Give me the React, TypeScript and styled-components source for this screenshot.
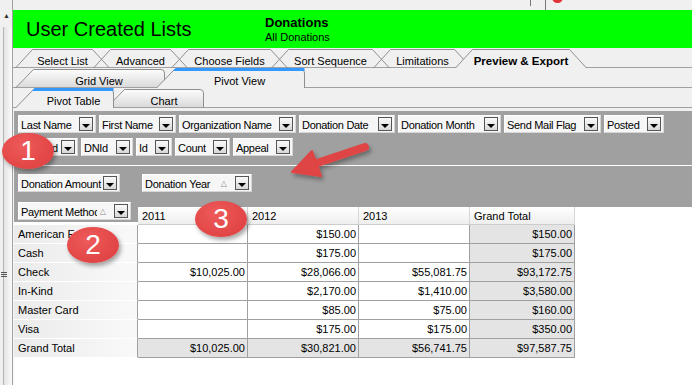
import React from "react";
import styled, { createGlobalStyle } from "styled-components";

const LINE = "#a0a0a0";
const PANEL = "#f0f0f0";
const TAB_EDGE = "#8f8f8f";
const UI_FONT = `"Liberation Sans", Arial, sans-serif`;

const GlobalStyle = createGlobalStyle`
  * { box-sizing: border-box; }
  html, body { margin: 0; padding: 0; background: #fff; }
  body { font-family: ${UI_FONT}; font-size: 11px; color: #000; }
`;

const Page = styled.div`
  position: relative;
  display: flex;
  width: 692px;
  height: 385px;
  overflow: hidden;
  background: #fff;
`;

const Gutter = styled.div`
  display: flex;
  flex-direction: column;
  flex: none;
  width: 13px;
  border-right: 1px solid ${LINE};
  background: ${PANEL};
`;

const ScrollUp = styled.div`
  height: 27px;
  padding: 12px 0 0 3px;
  font-size: 7px;
  line-height: 7px;
  color: #333;
`;

const ScrollTrack = styled.div`
  flex: 1;
  margin-left: 3px;
  padding-top: 245px;
  border-left: 1px solid #b4b4b4;
  background: linear-gradient(to right, #e4e4e4, #fbfbfb);
`;

const Grip = styled.div`
  width: 6px;
  height: 5px;
  margin-left: -3px;
  background: repeating-linear-gradient(#555 0 1px, transparent 1px 2px);
`;

const Main = styled.div`
  display: flex;
  flex-direction: column;
  flex: 1;
  min-width: 0;
`;

const TopStrip = styled.div`
  display: flex;
  align-items: flex-start;
  height: 10px;
  padding-left: 517px;
  background: ${PANEL};
`;

const StripMark = styled.span<{ $h: number; $gap: number }>`
  width: 1px;
  height: ${(p) => p.$h}px;
  margin-right: ${(p) => p.$gap}px;
  background: #777;
`;

const StripDot = styled.span`
  width: 11px;
  height: 11px;
  margin-top: -8px;
  border-radius: 50%;
  background: #e03535;
`;

const Header = styled.div`
  display: flex;
  align-items: center;
  height: 38px;
  background: #00ff00;
`;

const Title = styled.div`
  width: 252px;
  padding-left: 13px;
  font-size: 20px;
`;

const Subject = styled.div`
  display: flex;
  flex-direction: column;
`;

const SubjectName = styled.span`
  font-size: 13px;
  font-weight: 700;
  line-height: 15px;
`;

const SubjectSub = styled.span`
  font-size: 11px;
  line-height: 14px;
`;

const TabStrip = styled.div`
  display: flex;
  height: 20px;
  padding-left: 2px;
  background: ${PANEL};
  box-shadow: inset 0 -1px ${LINE};
`;

const TabBox = styled.div<{ $w: number; $overlap: number; $active?: boolean }>`
  position: relative;
  flex: none;
  width: ${(p) => p.$w}px;
  height: 20px;
  margin-left: ${(p) => -p.$overlap}px;
  z-index: ${(p) => (p.$active ? 2 : 1)};
`;

const TabShape = styled.svg`
  position: absolute;
  left: 0;
  top: 0;
  overflow: visible;
`;

const TabText = styled.span<{ $inset: number; $bold?: boolean }>`
  position: relative;
  display: block;
  padding: 6px 0 0 ${(p) => p.$inset}px;
  text-align: center;
  line-height: 14px;
  white-space: nowrap;
  font-weight: ${(p) => (p.$bold ? 700 : 400)};
  font-size: ${(p) => (p.$bold ? 11.5 : 11)}px;
`;

type TabProps = { label: string; width: number; active?: boolean; overlap?: number };

function StepTab({ label, width, active, overlap = 17 }: TabProps) {
  const outline = `M0.5 20 L17.5 1.5 H${width - 17.5} L${width - 0.5} 20`;
  return (
    <TabBox $w={width} $overlap={overlap} $active={active}>
      <TabShape width={width} height={20}>
        {active && <path d={`${outline} Z`} fill={PANEL} />}
        <path d={outline} fill="none" stroke={TAB_EDGE} />
      </TabShape>
      <TabText $inset={0} $bold={active}>
        {label}
      </TabText>
    </TabBox>
  );
}

function ViewTab({ label, width, active, overlap = 0 }: TabProps) {
  const id = `tabfill-${label.replace(/\s/g, "")}`;
  const outline = `M0.5 20 L18.5 1.5 H${width - 4} Q${width - 0.5} 1.5 ${width - 0.5} 5 V20`;
  const bottom = active ? 20 : 19;
  return (
    <TabBox $w={width} $overlap={overlap} $active={active}>
      <TabShape width={width} height={20}>
        <defs>
          <linearGradient id={id} x1="0" y1="0" x2="0" y2="1">
            <stop offset="0" stopColor="#fdfdfd" />
            <stop offset="1" stopColor="#dadada" />
          </linearGradient>
        </defs>
        <path
          d={`M0.5 ${bottom} L18.5 1.5 H${width - 4} Q${width - 0.5} 1.5 ${width - 0.5} 5 V${bottom} Z`}
          fill={active ? PANEL : `url(#${id})`}
        />
        <path d={outline} fill="none" stroke={TAB_EDGE} />
        {active && <path d={`M16.5 3.5 L19.5 0 H${width - 0.5} V3 H17 Z`} fill="#3399ff" />}
      </TabShape>
      <TabText $inset={18}>{label}</TabText>
    </TabBox>
  );
}

const PivotFrame = styled.div`
  flex: 1;
  border-left: 1px solid #f8f8f8;
  background: #fff;
`;

const FilterZone = styled.div`
  display: flex;
  flex-direction: column;
  gap: 5px;
  padding: 4px 0 9px 4px;
  border-top: 3px solid ${PANEL};
  border-bottom: 1px solid #fff;
  background: ${LINE};
`;

const FieldRow = styled.div`
  display: flex;
  gap: 3px;
`;

const DataZone = styled.div`
  display: flex;
  height: 41px;
  padding-top: 8px;
  background: ${LINE};
`;

const ZoneCell = styled.div<{ $w: number }>`
  flex: none;
  width: ${(p) => p.$w}px;
  padding-left: 4px;
`;

const FieldButton = styled.div<{ $w: number; $lift?: number }>`
  display: flex;
  align-items: center;
  flex: none;
  width: ${(p) => p.$w}px;
  height: 18px;
  margin-top: ${(p) => -(p.$lift ?? 0)}px;
  padding: 0 2px 0 2px;
  border: 1px solid;
  border-color: #ffffff #d6d6d6 #d6d6d6 #ffffff;
  background: #f6f6f6;
`;

const FieldLabel = styled.span`
  flex: 1;
  min-width: 0;
  overflow: hidden;
  white-space: nowrap;
  line-height: 14px;
  padding-top: 2px;
  letter-spacing: -0.3px;
`;

const SortMark = styled.span`
  margin: 0 8px 0 3px;
  font-family: "DejaVu Sans", sans-serif;
  font-size: 8px;
  color: #8c8c8c;
`;

const DropBox = styled.span`
  position: relative;
  flex: none;
  width: 14px;
  height: 14px;
  border: 1px solid #555;
  background: linear-gradient(#fafafa, #d8d8d8);

  &::after {
    content: "";
    position: absolute;
    left: 2px;
    bottom: 2px;
    border-left: 4px solid transparent;
    border-right: 4px solid transparent;
    border-top: 4px solid #000;
  }
`;

type FieldProps = { name: string; width: number; sorted?: boolean; lift?: number };

function Field({ name, width, sorted, lift }: FieldProps) {
  return (
    <FieldButton $w={width} $lift={lift}>
      <FieldLabel>{name}</FieldLabel>
      {sorted && <SortMark>△</SortMark>}
      <DropBox />
    </FieldButton>
  );
}

const COLUMNS = [124, 110, 111, 111, 105];

const PivotGrid = styled.div`
  display: grid;
  grid-template-columns: ${COLUMNS.map((c) => `${c}px`).join(" ")};
  grid-template-rows: 18px repeat(7, 19px);
`;

const CornerCell = styled.div`
  padding-left: 4px;
  background: linear-gradient(${LINE} 0 15px, transparent 15px);
`;

const ColHeader = styled.div`
  padding: 1px 0 0 4px;
  line-height: 16px;
  border-right: 1px solid #d6d6d6;
  border-bottom: 1px solid #cdcdcd;
  background: linear-gradient(#ffffff, #eeeeee);
  white-space: nowrap;
`;

const RowHeader = styled.div`
  padding: 1px 0 0 4px;
  line-height: 17px;
  overflow: hidden;
  white-space: nowrap;
  border-right: 1px solid ${LINE};
  border-bottom: 1px solid #fff;
  background: linear-gradient(to right, #ebebeb, #f9f9f9);
`;

const DataCell = styled.div<{ $total?: boolean }>`
  padding: 1px 2px 0 0;
  line-height: 17px;
  text-align: right;
  white-space: nowrap;
  border-right: 1px solid ${LINE};
  border-bottom: 1px solid ${LINE};
  background: ${(p) => (p.$total ? "#e4e4e4" : "#fff")};
`;

const Badge = styled.div<{ $x: number; $y: number }>`
  position: absolute;
  left: ${(p) => p.$x}px;
  top: ${(p) => p.$y}px;
  display: flex;
  align-items: center;
  justify-content: center;
  width: 52px;
  height: 36px;
  border-radius: 50%;
  background: radial-gradient(ellipse at 40% 35%, #ee5a5a, #dc3c3c);
  box-shadow: 2px 3px 4px rgba(0, 0, 0, 0.35);
  color: #fff;
  font-size: 28px;
  line-height: 1;
`;

const ArrowLayer = styled.svg`
  position: absolute;
  left: 0;
  top: 0;
  pointer-events: none;
`;

const stepTabs = [
  { label: "Select List", width: 95 },
  { label: "Advanced", width: 95 },
  { label: "Choose Fields", width: 117 },
  { label: "Sort Sequence", width: 119 },
  { label: "Limitations", width: 99 },
  { label: "Preview & Export", width: 132, active: true },
];

const filterRows = [
  [
    { name: "Last Name", width: 78 },
    { name: "First Name", width: 77 },
    { name: "Organization Name", width: 117 },
    { name: "Donation Date", width: 96 },
    { name: "Donation Month", width: 103 },
    { name: "Send Mail Flag", width: 97 },
    { name: "Posted", width: 60 },
  ],
  [
    { name: "NameId", width: 60 },
    { name: "DNId", width: 52 },
    { name: "Id", width: 36 },
    { name: "Count", width: 55 },
    { name: "Appeal", width: 60 },
  ],
];

const years = ["2011", "2012", "2013", "Grand Total"];

const rows: { label: string; values: string[] }[] = [
  { label: "American Express", values: ["", "$150.00", "", "$150.00"] },
  { label: "Cash", values: ["", "$175.00", "", "$175.00"] },
  { label: "Check", values: ["$10,025.00", "$28,066.00", "$55,081.75", "$93,172.75"] },
  { label: "In-Kind", values: ["", "$2,170.00", "$1,410.00", "$3,580.00"] },
  { label: "Master Card", values: ["", "$85.00", "$75.00", "$160.00"] },
  { label: "Visa", values: ["", "$175.00", "$175.00", "$350.00"] },
  { label: "Grand Total", values: ["$10,025.00", "$30,821.00", "$56,741.75", "$97,587.75"] },
];

export default function App() {
  return (
    <>
      <GlobalStyle />
      <Page>
        <Gutter>
          <ScrollUp>▲</ScrollUp>
          <ScrollTrack>
            <Grip />
          </ScrollTrack>
        </Gutter>

        <Main>
          <TopStrip>
            <StripMark $h={6} $gap={14} />
            <StripMark $h={10} $gap={6} />
            <StripDot />
          </TopStrip>

          <Header>
            <Title>User Created Lists</Title>
            <Subject>
              <SubjectName>Donations</SubjectName>
              <SubjectSub>All Donations</SubjectSub>
            </Subject>
          </Header>

          <TabStrip>
            {stepTabs.map((t, i) => (
              <StepTab key={t.label} {...t} overlap={i === 0 ? 0 : 17} />
            ))}
          </TabStrip>

          <TabStrip>
            <ViewTab label="Grid View" width={150} />
            <ViewTab label="Pivot View" width={149} overlap={9} active />
          </TabStrip>

          <TabStrip>
            <ViewTab label="Pivot Table" width={99} active />
            <ViewTab label="Chart" width={98} overlap={8} />
          </TabStrip>

          <PivotFrame>
            <FilterZone>
              {filterRows.map((fields, i) => (
                <FieldRow key={i}>
                  {fields.map((f) => (
                    <Field key={f.name} {...f} />
                  ))}
                </FieldRow>
              ))}
            </FilterZone>

            <DataZone>
              <ZoneCell $w={COLUMNS[0]}>
                <Field name="Donation Amount" width={102} />
              </ZoneCell>
              <ZoneCell $w={COLUMNS[1]}>
                <Field name="Donation Year" width={110} sorted />
              </ZoneCell>
            </DataZone>

            <PivotGrid>
              <CornerCell>
                <Field name="Payment Method" width={113} sorted lift={5} />
              </CornerCell>
              {years.map((y) => (
                <ColHeader key={y}>{y}</ColHeader>
              ))}
              {rows.map((r, ri) => (
                <React.Fragment key={r.label}>
                  <RowHeader>{r.label}</RowHeader>
                  {r.values.map((v, ci) => (
                    <DataCell key={ci} $total={ci === 3 || ri === rows.length - 1}>
                      {v}
                    </DataCell>
                  ))}
                </React.Fragment>
              ))}
            </PivotGrid>
          </PivotFrame>
        </Main>

        <ArrowLayer width={692} height={385}>
          <defs>
            <filter id="arrow-shadow" x="-20%" y="-20%" width="140%" height="160%">
              <feDropShadow dx="2" dy="3" stdDeviation="2" floodOpacity="0.35" />
            </filter>
          </defs>
          <g filter="url(#arrow-shadow)" fill="#e04444" stroke="#e04444">
            <line x1="365" y1="147" x2="314" y2="164" strokeWidth="8" strokeLinecap="round" />
            <polygon points="292,172 312,151 321,176" strokeWidth="2" strokeLinejoin="round" />
          </g>
        </ArrowLayer>

        <Badge $x={2} $y={133}>1</Badge>
        <Badge $x={67} $y={227}>2</Badge>
        <Badge $x={195} $y={201}>3</Badge>
      </Page>
    </>
  );
}
